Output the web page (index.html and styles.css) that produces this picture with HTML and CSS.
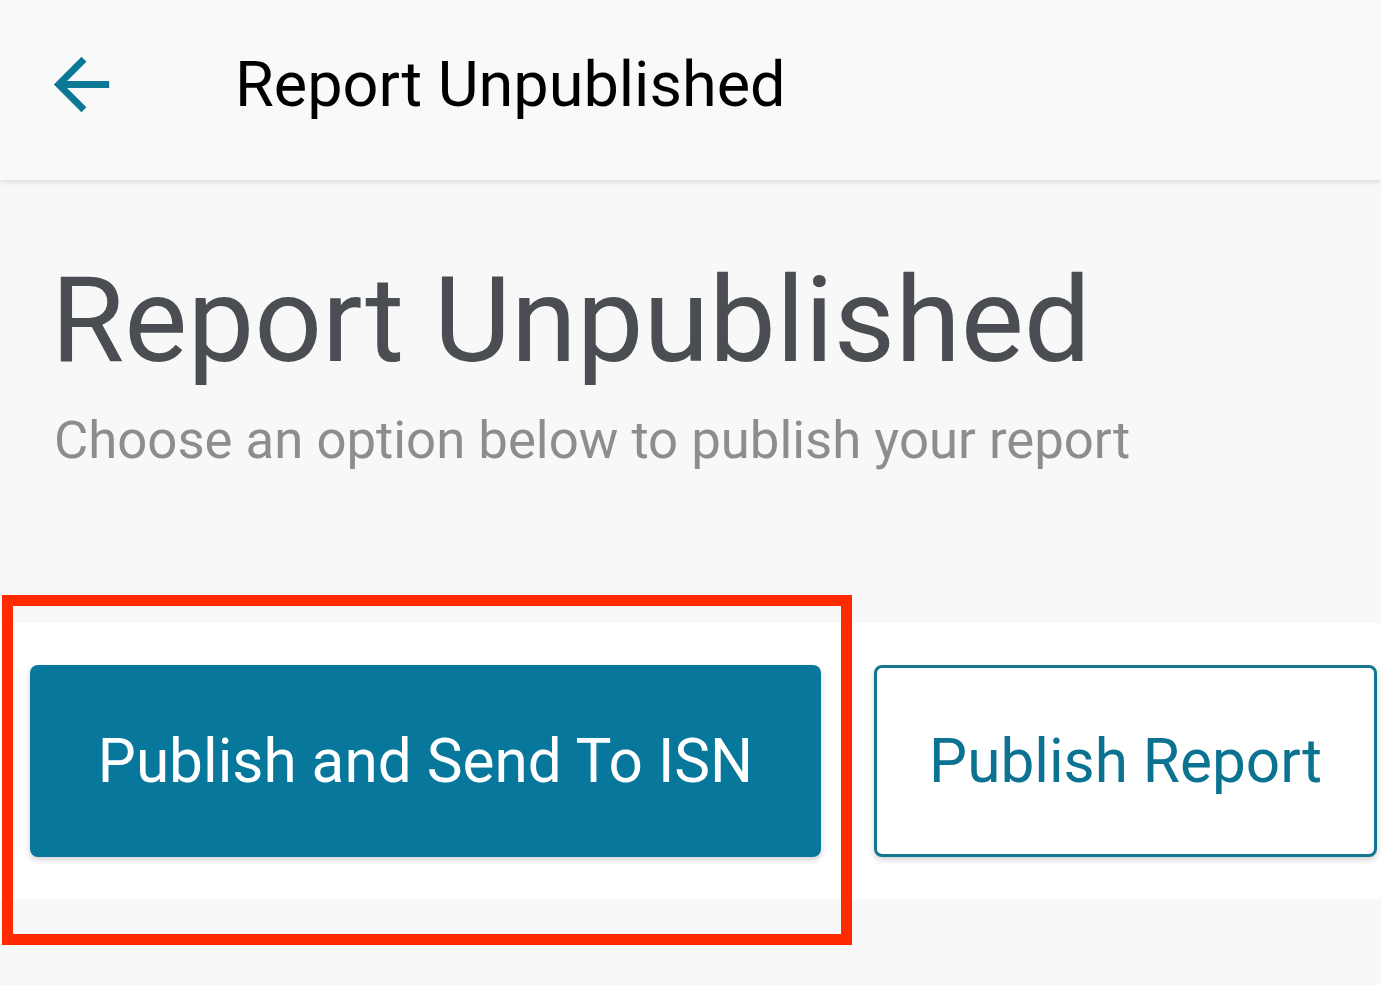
FILE: index.html
```html
<!DOCTYPE html>
<html lang="en">
<head>
<meta charset="utf-8">
<title>Report Unpublished</title>
<link rel="stylesheet" href="styles.css">
</head>
<body>
<header class="appbar">
  <button class="back" aria-label="Back">
    <svg viewBox="0 0 24 24" width="83" height="83"><path fill="#0b7896" d="M20 11H7.83l5.59-5.59L12 4l-8 8 8 8 1.41-1.41L7.83 13H20v-2z"/></svg>
  </button>
  <h1 class="appbar-title">Report Unpublished</h1>
</header>
<main class="content">
  <h2 class="heading">Report Unpublished</h2>
  <p class="subtitle">Choose an option below to publish your report</p>
</main>
<section class="actions">
  <button class="btn btn-primary">Publish and Send To ISN</button>
  <button class="btn btn-outline">Publish Report</button>
</section>
<div class="highlight"></div>
</body>
</html>
```

FILE: styles.css
```css
html, body {
  margin: 0;
  padding: 0;
}
body {
  background: #f8f8f8;
  font-family: Roboto, "Noto Sans", "Liberation Sans", sans-serif;
  width: 1381px;
  height: 985px;
  overflow: hidden;
  position: relative;
}
.appbar {
  height: 180px;
  box-sizing: border-box;
  padding: 0 0 12px 40px;
  display: flex;
  align-items: center;
  background: #f9f9f9;
  box-shadow: 0 2px 5px rgba(0,0,0,0.12);
  position: relative;
  z-index: 1;
}
.back {
  border: 0;
  background: none;
  padding: 0;
  width: 83px;
  height: 83px;
  display: block;
}
.back svg { display: block; }
.appbar-title {
  margin: 0 0 0 112px;
  font-size: 63px;
  font-weight: 400;
  color: #000;
  line-height: 1;
}
.content {
  padding: 71px 0 0 51px;
}
.heading {
  margin: 0;
  font-size: 119px;
  font-weight: 400;
  color: #4a4e53;
  line-height: normal;
}
.subtitle {
  margin: 19px 0 0 3px;
  font-size: 52.7px;
  color: #8b8d8f;
  line-height: normal;
}
.actions {
  margin-top: 152px;
  background: #fff;
  height: 276px;
  box-sizing: border-box;
  padding: 42px 4px 0 30px;
  display: flex;
  gap: 53px;
  align-items: flex-start;
}
.btn {
  font-family: Roboto, "Noto Sans", "Liberation Sans", sans-serif;
  font-size: 60.3px;
  height: 192px;
  border-radius: 8px;
  box-sizing: border-box;
  padding: 0;
  cursor: pointer;
  box-shadow: 0 3px 6px rgba(0,0,0,0.18);
}
.btn-primary {
  width: 791px;
  background: #07789b;
  color: #fff;
  border: 0;
}
.btn-outline {
  width: 503px;
  background: #fff;
  color: #0b7291;
  border: 3px solid #16768f;
}
.highlight {
  position: absolute;
  left: 2px;
  top: 595px;
  width: 850px;
  height: 350px;
  box-sizing: border-box;
  border: 11px solid #ff2a00;
  pointer-events: none;
}
```
